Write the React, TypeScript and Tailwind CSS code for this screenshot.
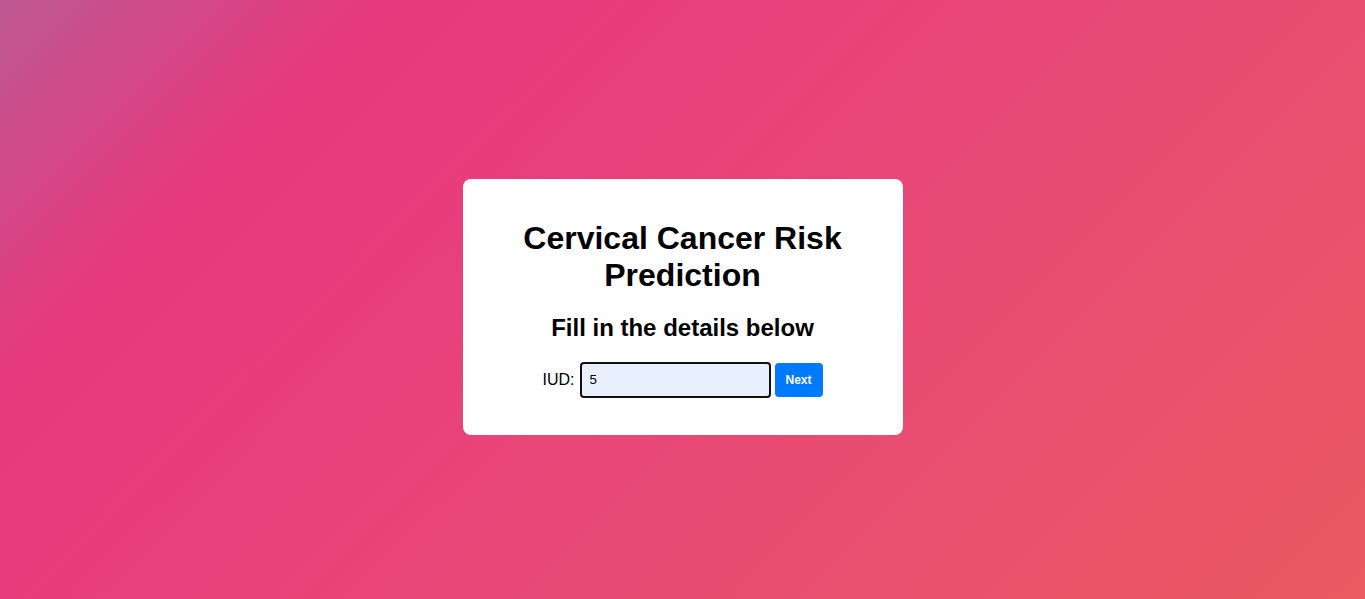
import { useState } from "react";

export default function App() {
  const [iud, setIud] = useState("5");

  return (
    <main className="flex min-h-screen items-center justify-center bg-[linear-gradient(135deg,#bd5892_0%,#e7397d_20%,#e8437a_45%,#e9506e_75%,#ea5a60_100%)] pt-[14px] font-['Liberation_Sans',Arial,sans-serif]">
      <div className="w-[440px] rounded-lg bg-white px-5 pt-5 pb-[37px] text-center text-black">
        <h1 className="mx-auto mt-[21px] mb-[20px] max-w-[360px] text-[32px] leading-[37px] font-bold">
          Cervical Cancer Risk Prediction
        </h1>
        <h2 className="mt-[19px] mb-[20px] text-[24px] leading-[28px] font-bold">
          Fill in the details below
        </h2>

        <form
          className="flex items-center justify-center"
          onSubmit={(e) => e.preventDefault()}
        >
          <label htmlFor="iud" className="mr-[5px] text-[16px]">
            IUD:
          </label>
          <input
            id="iud"
            type="text"
            autoFocus
            value={iud}
            onChange={(e) => setIud(e.target.value)}
            className="h-[36px] w-[191px] rounded-[4px] border-2 border-[#111] bg-[#e8f0fe] px-[8px] text-[13.33px] caret-black outline-none"
          />
          <button
            type="submit"
            className="ml-[4px] h-[34px] w-[48px] rounded-[4px] bg-[#007bff] text-[12px] font-bold text-white"
          >
            Next
          </button>
        </form>
      </div>
    </main>
  );
}
